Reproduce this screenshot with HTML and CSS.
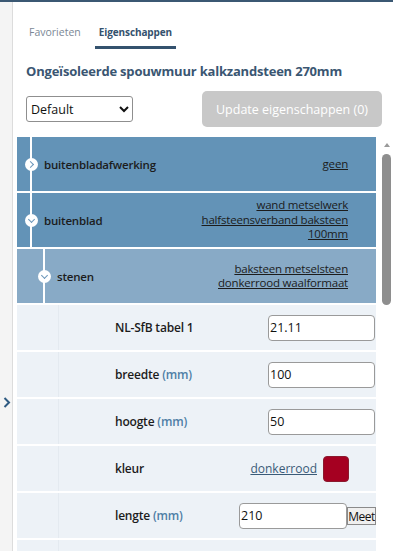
FILE: index.html
```html
<!DOCTYPE html>
<html lang="nl">
<head>
  <meta charset="UTF-8">
  <title>Eigenschappen</title>
  <link rel="stylesheet" href="styles.css">
</head>
<body>

<div class="topbar"></div>
<div class="layout">
  <aside class="rail">
    <span class="rail-toggle">
      <svg width="8" height="11" viewBox="0 0 8 11"><path d="M1.5 1 L6 5.5 L1.5 10" fill="none" stroke="#2f5b82" stroke-width="2"/></svg>
    </span>
  </aside>

  <main class="panel">
    <nav class="tabs">
      <a class="tab">Favorieten</a>
      <a class="tab active">Eigenschappen</a>
    </nav>

    <h2 class="title">Ongeïsoleerde spouwmuur kalkzandsteen 270mm</h2>

    <div class="toolbar">
      <select class="preset">
        <option>Default</option>
      </select>
      <button class="update" disabled>Update eigenschappen (0)</button>
    </div>

    <div class="tree-wrap">
      <div class="tree">
        <div class="group level-1">
          <span class="line"><span class="knob closed"></span></span>
          <span class="name">buitenbladafwerking</span>
          <span class="value"><a>geen</a></span>
        </div>
        <div class="group level-1">
          <span class="line"><span class="knob open"></span></span>
          <span class="name">buitenblad</span>
          <span class="value"><a>wand metselwerk<br>halfsteensverband baksteen<br>100mm</a></span>
        </div>
        <div class="group level-2">
          <span class="line"><span class="knob open"></span></span>
          <span class="name">stenen</span>
          <span class="value"><a>baksteen metselsteen<br>donkerrood waalformaat</a></span>
        </div>

        <div class="prop">
          <span class="line"></span>
          <span class="label">NL-SfB tabel 1</span>
          <span class="field"><input type="text" value="21.11"></span>
        </div>
        <div class="prop">
          <span class="line"></span>
          <span class="label">breedte <em>(mm)</em></span>
          <span class="field"><input type="text" value="100"></span>
        </div>
        <div class="prop">
          <span class="line"></span>
          <span class="label">hoogte <em>(mm)</em></span>
          <span class="field"><input type="text" value="50"></span>
        </div>
        <div class="prop">
          <span class="line"></span>
          <span class="label">kleur</span>
          <span class="field"><a class="color-link">donkerrood</a><span class="swatch"></span></span>
        </div>
        <div class="prop">
          <span class="line"></span>
          <span class="label">lengte <em>(mm)</em></span>
          <span class="field"><input type="text" class="short" value="210"><button class="measure">Meet</button></span>
        </div>
        <div class="prop">
          <span class="line"></span>
          <span class="label"></span>
          <span class="field"></span>
        </div>
      </div>

      <div class="scrollbar">
        <span class="arrow"></span>
        <span class="thumb"></span>
      </div>
    </div>
  </main>
</div>

</body>
</html>
```

FILE: styles.css
```css
html, body {
  margin: 0;
  height: 100%;
  overflow: hidden;
}
body {
  font-family: 'Open Sans', 'Noto Sans', sans-serif;
  background: white;
  color: #1c1c1c;
}
.topbar {
  height: 2px;
  background: #3b5873;
}
.layout {
  display: flex;
  height: 549px;
}
.rail {
  width: 12px;
  flex: none;
  background: #f4f4f4;
  border-right: 1px solid #dcdcdc;
  display: flex;
  align-items: center;
}
.rail-toggle {
  display: flex;
  margin-left: 3px;
  margin-top: 252px;
}
.panel {
  flex: 1;
  display: flex;
  flex-direction: column;
  min-width: 0;
}
.tabs {
  display: flex;
  gap: 10px;
  padding: 20px 0 0 12px;
}
.tab {
  font-size: 10.5px;
  color: #7b8896;
  padding: 3px 4px 7px 4px;
  border-bottom: 3px solid transparent;
}
.tab.active {
  font-weight: 700;
  font-size: 10px;
  letter-spacing: -0.1px;
  color: #34516d;
  border-bottom-color: #34526e;
}
.title {
  margin: 13px 0 0 13px;
  font-size: 13px;
  font-weight: 700;
  color: #3a5672;
  letter-spacing: -0.2px;
}
.toolbar {
  display: flex;
  align-items: center;
  justify-content: space-between;
  padding: 11px 11px 0 13px;
}
.preset {
  width: 107px;
  height: 26px;
  font-family: 'Open Sans', sans-serif;
  font-size: 12.5px;
  border: 1px solid #8f8f8f;
  border-radius: 3px;
  background: white;
  color: #111;
}
.update {
  width: 180px;
  height: 36px;
  border: none;
  border-radius: 5px;
  background: #c8c8c8;
  color: white;
  font-family: 'Open Sans', sans-serif;
  font-size: 12.5px;
}
.tree-wrap {
  display: flex;
  margin-top: 10px;
  padding-left: 4px;
  min-height: 0;
  flex: 1;
  overflow: hidden;
}
.tree {
  width: 359px;
  display: flex;
  flex-direction: column;
  gap: 2px;
}
.group {
  height: 54px;
  flex: none;
  display: flex;
  align-items: center;
  font-size: 11.5px;
}
.level-1 {
  background: #6393b7;
}
.level-2 {
  background: #88aac6;
}
.group .line {
  align-self: stretch;
  width: 2px;
  background: white;
  display: flex;
  align-items: center;
  justify-content: center;
  margin-left: 13px;
}
.level-2 .line {
  margin-left: 26px;
}
.knob {
  flex: none;
  width: 13px;
  height: 13px;
  border-radius: 50%;
  background: white;
  position: relative;
}
.knob::after {
  content: "";
  position: absolute;
  width: 4px;
  height: 4px;
  border-right: 1.5px solid #6b97ba;
  border-bottom: 1.5px solid #6b97ba;
}
.knob.closed::after {
  left: 3px;
  top: 4px;
  transform: rotate(-45deg);
}
.knob.open::after {
  left: 4px;
  top: 3px;
  transform: rotate(45deg);
}
.group .name {
  font-weight: 600;
  letter-spacing: -0.2px;
  margin-left: 12px;
  flex: 1;
}
.group .value {
  text-align: right;
  line-height: 14.5px;
  letter-spacing: -0.2px;
  margin-right: 28px;
}
.group .value a,
.color-link {
  text-decoration: underline;
}
.prop {
  height: 45px;
  flex: none;
  display: flex;
  align-items: center;
  background: #edf2f7;
  font-size: 12px;
}
.prop .line {
  align-self: stretch;
  width: 1px;
  margin-left: 41px;
  background: #e4eaf0;
}
.prop .label {
  margin-left: 56px;
  font-weight: 600;
  letter-spacing: -0.2px;
  flex: 1;
}
.prop .label em {
  font-style: normal;
  color: #4f7fa6;
}
.field {
  display: flex;
  align-items: center;
  margin-right: 1px;
}
.field input {
  width: 107px;
  height: 26px;
  box-sizing: border-box;
  border: 1px solid #9a9a9a;
  border-radius: 4px;
  padding: 0 1px;
  font-family: 'Open Sans', sans-serif;
  font-size: 12.5px;
  color: #111;
}
.field input.short {
  width: 108px;
}
.measure {
  height: 18px;
  width: 29px;
  padding: 0;
  margin-right: -1px;
  font-family: 'Open Sans', sans-serif;
  font-size: 12px;
  letter-spacing: -0.5px;
  border: 1px solid #8a8a8a;
  background: #efefef;
  color: #111;
  overflow: hidden;
  white-space: nowrap;
}
.color-link {
  color: #3a5b78;
  font-size: 12px;
  margin-right: 6px;
}
.swatch {
  width: 26px;
  height: 26px;
  border-radius: 4px;
  background: #a50021;
  margin-right: 26px;
  box-sizing: border-box;
  border: 1px solid #8a1a2e;
}
.scrollbar {
  width: 13px;
  margin-left: 4px;
  display: flex;
  flex-direction: column;
  align-items: center;
}
.arrow {
  margin-top: 6px;
  width: 0;
  height: 0;
  border-left: 3.5px solid transparent;
  border-right: 3.5px solid transparent;
  border-bottom: 4px solid #9a9a9a;
}
.thumb {
  margin-top: 7px;
  width: 9px;
  height: 151px;
  border-radius: 5px;
  background: #8e8e8e;
}
```
